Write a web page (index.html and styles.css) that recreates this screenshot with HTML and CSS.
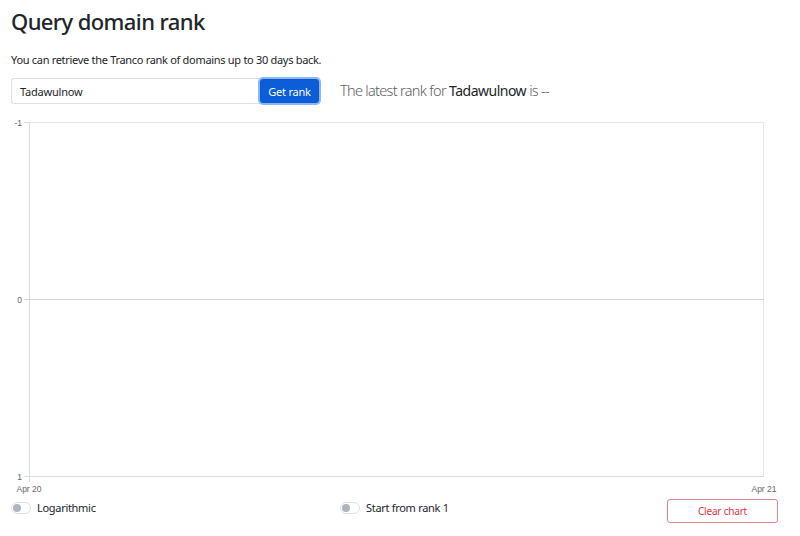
FILE: index.html
```html
<!DOCTYPE html>
<html lang="en">
<head>
    <meta charset="UTF-8">
    <meta name="viewport" content="width=device-width, initial-scale=1.0">
    <title>Query domain rank</title>
    <link rel="stylesheet" href="styles.css">
</head>
<body>

    <div class="container">
        <h2 class="title">Query domain rank</h2>
        <p class="lead-text">You can retrieve the Tranco rank of domains up to 30 days back.</p>

        <div class="query-row">
            <div class="input-group">
                <input type="text" class="domain-input" value="Tadawulnow">
                <button class="btn-primary">Get rank</button>
            </div>
            <p class="latest">The latest rank for <span class="domain">Tadawulnow</span> is --</p>
        </div>

        <div class="chart">
            <svg width="767" height="382" viewBox="0 0 767 382">
                <!-- grid -->
                <line x1="18" y1="6.5" x2="753" y2="6.5" stroke="#e6e6e6"/>
                <line x1="752.5" y1="6" x2="752.5" y2="361" stroke="#e6e6e6"/>
                <line x1="13" y1="183.5" x2="753" y2="183.5" stroke="#d4d4d4"/>
                <line x1="13" y1="360.5" x2="753" y2="360.5" stroke="#dcdcdc"/>
                <line x1="18.5" y1="6" x2="18.5" y2="366" stroke="#dcdcdc"/>
                <line x1="13" y1="6.5" x2="18" y2="6.5" stroke="#dcdcdc"/>
                <!-- y labels -->
                <text x="11" y="9.5" class="tick" text-anchor="end">-1</text>
                <text x="11" y="186.5" class="tick" text-anchor="end">0</text>
                <text x="11" y="364" class="tick" text-anchor="end">1</text>
                <!-- x labels -->
                <text x="18" y="376" class="tick" text-anchor="middle">Apr 20</text>
                <text x="753" y="376" class="tick" text-anchor="middle">Apr 21</text>
            </svg>
        </div>

        <div class="options">
            <label class="switch">
                <span class="switch-track"></span>
                Logarithmic
            </label>
            <label class="switch">
                <span class="switch-track"></span>
                Start from rank 1
            </label>
            <button class="btn-clear">Clear chart</button>
        </div>
    </div>

</body>
</html>
```

FILE: styles.css
```css
body {
    font-family: 'Noto Sans', 'Open Sans', sans-serif;
    margin: 0;
    padding: 0;
    color: #212529;
    background: #fff;
    letter-spacing: -0.3px;
}

.container {
    padding: 0 22px 0 11px;
}

.title {
    font-size: 22px;
    font-weight: 500;
    margin: 0;
    padding-top: 5px;
    line-height: 32px;
    letter-spacing: -0.6px;
}

.lead-text {
    font-size: 11px;
    margin: 14px 0 9px;
    line-height: 18px;
}

.query-row {
    display: flex;
    align-items: center;
    gap: 21px;
    height: 26px;
}

.input-group {
    display: flex;
    align-items: center;
}

.domain-input {
    width: 248px;
    height: 26px;
    box-sizing: border-box;
    border: 1px solid #dee2e6;
    border-right: none;
    border-radius: 3px 0 0 3px;
    padding: 0 8px;
    font-family: inherit;
    font-size: 11px;
    letter-spacing: -0.2px;
    color: #212529;
}

.btn-primary {
    height: 24px;
    width: 59px;
    background-color: #0b5ed7;
    border: 1px solid #0a58ca;
    color: #fff;
    border-radius: 3px;
    font-family: inherit;
    font-size: 11px;
    letter-spacing: -0.2px;
    padding: 0;
    box-shadow: 0 0 0 2px #8bb8f4;
    margin-left: 1px;
}

.latest {
    margin: 0;
    font-size: 14.5px;
    font-weight: 300;
    color: #5a5f64;
    letter-spacing: -0.7px;
    line-height: 20px;
    padding-bottom: 2px;
}

.latest .domain {
    font-weight: 400;
    color: #212529;
    letter-spacing: -0.5px;
    font-size: 14px;
}

.chart {
    margin-top: 12px;
    height: 382px;
}

.tick {
    font-family: 'Liberation Sans', Arial, sans-serif;
    font-size: 8.5px;
    letter-spacing: 0;
    fill: #666;
}

.options {
    display: grid;
    grid-template-columns: 329px 1fr auto;
    align-items: start;
    margin-top: 1px;
}

.switch {
    display: flex;
    align-items: center;
    gap: 6px;
    font-size: 11px;
    color: #212529;
    margin-top: 1px;
}

.switch-track {
    width: 18px;
    height: 10px;
    border: 1px solid #dee2e6;
    border-radius: 6px;
    position: relative;
}

.switch-track::before {
    content: '';
    position: absolute;
    left: 1px;
    top: 1px;
    width: 8px;
    height: 8px;
    border-radius: 50%;
    background: #adb5bd;
}

.btn-clear {
    width: 111px;
    height: 24px;
    background: #fff;
    border: 1px solid #e4828c;
    color: #dc3545;
    border-radius: 3px;
    font-family: inherit;
    font-size: 10px;
    letter-spacing: -0.2px;
}
```
